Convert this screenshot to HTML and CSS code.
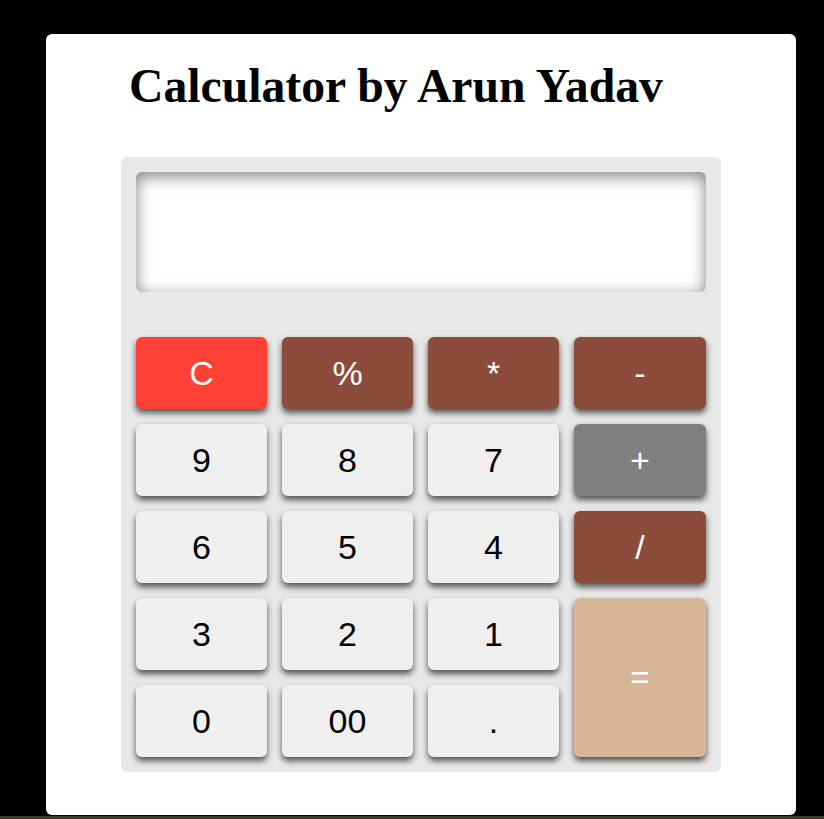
FILE: index.html
```html
<!DOCTYPE html>
<html>
<head>
<meta charset="utf-8">
<title>Calculator</title>
<link rel="stylesheet" href="styles.css">
</head>
<body>
<div class="page">
  <div class="card">
    <h1 class="title">Calculator by Arun Yadav</h1>
    <div class="calc">
      <div class="display"></div>
      <div class="keys">
        <button class="key clear">C</button>
        <button class="key op">%</button>
        <button class="key op">*</button>
        <button class="key op">-</button>
        <button class="key">9</button>
        <button class="key">8</button>
        <button class="key">7</button>
        <button class="key plus">+</button>
        <button class="key">6</button>
        <button class="key">5</button>
        <button class="key">4</button>
        <button class="key op">/</button>
        <button class="key">3</button>
        <button class="key">2</button>
        <button class="key">1</button>
        <button class="key equals">=</button>
        <button class="key">0</button>
        <button class="key">00</button>
        <button class="key">.</button>
      </div>
    </div>
  </div>
  <div class="strip"></div>
</div>
</body>
</html>
```

FILE: styles.css
```css
html, body {
  margin: 0;
  padding: 0;
  background: #000;
  height: 819px;
  overflow: hidden;
}
.page {
  padding-top: 34px;
}
.card {
  margin-left: 46px;
  width: 750px;
  height: 781px;
  box-sizing: border-box;
  background: #fff;
  border-radius: 6px;
  padding-top: 25px;
}
.title {
  margin: 0 0 45px 83px;
  font-family: "Liberation Serif", "Times New Roman", serif;
  font-weight: bold;
  font-size: 47.7px;
  line-height: 53px;
  color: #000;
}
.calc {
  width: 600px;
  margin: 0 auto;
  box-sizing: border-box;
  padding: 15px;
  background: #e8e8e8;
  border-radius: 6px;
}
.display {
  height: 120px;
  background: #fff;
  border-radius: 6px;
  box-shadow: inset 0 4px 16px rgba(0,0,0,0.5);
  margin-bottom: 45px;
}
.keys {
  display: grid;
  grid-template-columns: 131px 131px 131px 132px;
  grid-auto-rows: 72px;
  gap: 15px;
}
.key {
  border: none;
  border-radius: 6px;
  background: #efefef;
  color: #000;
  font-family: "Liberation Sans", Arial, sans-serif;
  font-size: 34px;
  padding: 0;
  box-shadow: 0 4px 6px rgba(0,0,0,0.65);
}
.clear {
  background: #ff4136;
  color: #fff;
}
.op {
  background: #8b4c3c;
  color: #fff;
}
.plus {
  background: #808080;
  color: #fff;
}
.equals {
  background: #d6b696;
  color: #fff;
  grid-row: span 2;
}
.strip {
  margin-top: 1px;
  height: 3px;
  background: #3b3b2c;
}
```
